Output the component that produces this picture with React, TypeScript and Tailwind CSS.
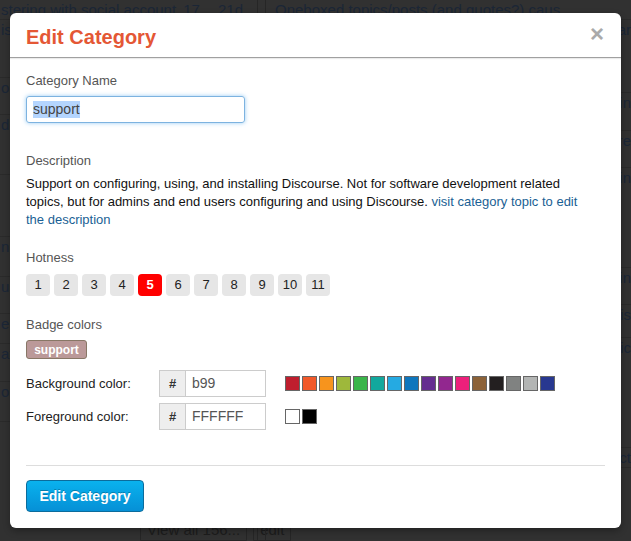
import React from 'react';

const font = { fontFamily: '"Liberation Sans", Arial, Helvetica, sans-serif' };

const swatches = [
  '#BF1E2E', '#F1592A', '#F7941D', '#9EB83B', '#3AB54A', '#12A89D', '#25AAE2', '#0E76BD',
  '#652D90', '#92278F', '#ED207B', '#8C6238', '#231F20', '#808281', '#B3B5B4', '#283890',
];

const leftRows = [
  { h: 'h-[20px]', t: 'stering with social account' },
  { h: 'h-[58px]', t: 'is' },
  { h: 'h-[37px]', t: 'or' },
  { h: 'h-[60px]', t: 'dc' },
  { h: 'h-[62px]', t: '' },
  { h: 'h-[40px]', t: 'n a' },
  { h: 'h-[37px]', t: 'us' },
  { h: 'h-[30px]', t: 'e' },
  { h: 'h-[38px]', t: 'ati' },
  { h: 'h-[40px]', t: 'or' },
];

const rightRows = [
  { h: 'h-[20px]', t: 'Oneboxed topics/posts (and quotes?) caus' },
  { h: 'h-[73px]', t: 'iar' },
  { h: 'h-[38px]', t: 'in' },
  { h: 'h-[37px]', t: 're' },
  { h: 'h-[100px]', t: 'in' },
  { h: 'h-[37px]', t: 'in' },
  { h: 'h-[33px]', t: 'dis' },
  { h: 'h-[110px]', t: 'nic' },
  { h: 'h-[20px]', t: 'ect' },
];

function ColorRow({ label, value, colors }: { label: string; value: string; colors: string[] }) {
  return (
    <div className="flex items-center">
      <div className="w-[133px] text-[13px] text-[#222]">{label}</div>
      <div className="flex h-[27px]">
        <div className="flex w-[27px] items-center justify-center border border-[#ccc] bg-[#eee] text-[13px] font-bold text-[#333]">
          #
        </div>
        <div className="flex w-[80px] items-center border border-l-0 border-[#ccc] px-[6px] text-[14px] text-[#555]">
          {value}
        </div>
      </div>
      <div className="ml-[19px] flex gap-[2px]">
        {colors.map((c) => (
          <div key={c} className="h-[15px] w-[15px] border border-[#666]" style={{ backgroundColor: c }} />
        ))}
      </div>
    </div>
  );
}

export default function App() {
  return (
    <div className="relative h-[541px] w-[631px] overflow-hidden bg-[#313131]" style={font}>
      {/* dimmed page behind the modal */}
      <div className="flex h-full text-[15px] leading-[20px] text-[#1b2636]">
        <div className="flex w-[258px] flex-col border-r border-[#262626]">
          {leftRows.map((r, i) => (
            <div key={i} className={`${r.h} flex items-start justify-between border-b border-[#2a2a2a] pl-[1px]`}>
              <span className="whitespace-nowrap">{r.t}</span>
              {i === 0 && (
                <span className="flex gap-[18px] pr-[14px]">
                  <span>17</span>
                  <span>21d</span>
                </span>
              )}
            </div>
          ))}
          <div className="flex flex-1 items-end gap-[6px] pl-[140px]">
            <span className="whitespace-nowrap rounded-t border border-[#262626] px-[6px] text-[#1d1d1d]">View all 156...</span>
            <span className="rounded-t border border-[#262626] px-[6px] text-[#1d1d1d]">edit</span>
          </div>
        </div>
        <div className="ml-[7px] flex flex-1 flex-col border-l border-[#262626] pl-[9px]">
          {rightRows.map((r, i) => (
            <div key={i} className={`${r.h} flex items-start overflow-hidden border-b border-[#2a2a2a] whitespace-nowrap ${i === 0 ? 'justify-start' : 'justify-end'}`}>
              {r.t}
            </div>
          ))}
        </div>
      </div>

      {/* modal */}
      <div className="absolute left-[10px] top-[13px] flex h-[515px] w-[611px] flex-col rounded-[6px] bg-white shadow-[0_3px_7px_rgba(0,0,0,0.3)]">
        <div className="flex h-[45px] items-center justify-between border-b border-[#a0a0a0] pl-[16px] pr-[17px] pt-[3px] shadow-[0_1px_1px_rgba(0,0,0,0.08)]">
          <h3 className="text-[20px] font-bold text-[#e45735]">Edit Category</h3>
          <span className="mt-[-6px] text-[24px] font-black leading-none text-[#aaa]">×</span>
        </div>

        <div className="flex flex-1 flex-col px-[16px] pt-[14px]">
          <div className="text-[13px] leading-[18px] text-[#555]">Category Name</div>
          <div className="mt-[6px] flex h-[27px] w-[219px] items-center rounded-[3px] border border-[#7db3e0] px-[6px] shadow-[0_0_4px_rgba(82,168,236,0.6)]">
            <span className="bg-[#b4d5fe] text-[14px] leading-[17px] text-[#444]">support</span>
          </div>

          <div className="mt-[29px] text-[13px] leading-[18px] text-[#555]">Description</div>
          <p className="mt-[5px] w-[572px] text-[13px] leading-[18px] text-[#111]">
            Support on configuring, using, and installing Discourse. Not for software development related topics, but
            for admins and end users configuring and using Discourse.{' '}
            <a className="text-[#1a5f94]">visit category topic to edit the description</a>
          </p>

          <div className="mt-[20px] text-[13px] leading-[18px] text-[#555]">Hotness</div>
          <div className="mt-[7px] flex gap-[4px]">
            {Array.from({ length: 11 }).map((_, i) => (
              <div
                key={i}
                className={`flex h-[22px] w-[24px] items-center justify-center rounded-[4px] text-[13px] ${
                  i === 4 ? 'bg-[#ff0000] font-bold text-white' : 'bg-[#e6e6e6] text-[#222]'
                }`}
              >
                {i + 1}
              </div>
            ))}
          </div>

          <div className="mt-[20px] text-[13px] leading-[18px] text-[#555]">Badge colors</div>
          <div className="mt-[6px] flex">
            <span className="flex h-[19px] w-[61px] items-center justify-center rounded-[3px] border border-[#876] bg-[#bb9999] text-[12px] font-bold text-white">
              support
            </span>
          </div>

          <div className="mt-[11px] flex flex-col gap-[6px]">
            <ColorRow label="Background color:" value="b99" colors={swatches} />
            <ColorRow label="Foreground color:" value="FFFFFF" colors={['#FFFFFF', '#000000']} />
          </div>

          <div className="mt-[35px] border-t border-[#ddd]" />
          <div className="mt-[14px]">
            <button className="h-[32px] w-[118px] rounded-[4px] border border-[#0b6c9c] bg-gradient-to-b from-[#0ab2ee] to-[#0690d6] text-[14px] font-bold text-white [text-shadow:0_-1px_0_rgba(0,0,0,0.25)]">
              Edit Category
            </button>
          </div>
        </div>
      </div>
    </div>
  );
}
